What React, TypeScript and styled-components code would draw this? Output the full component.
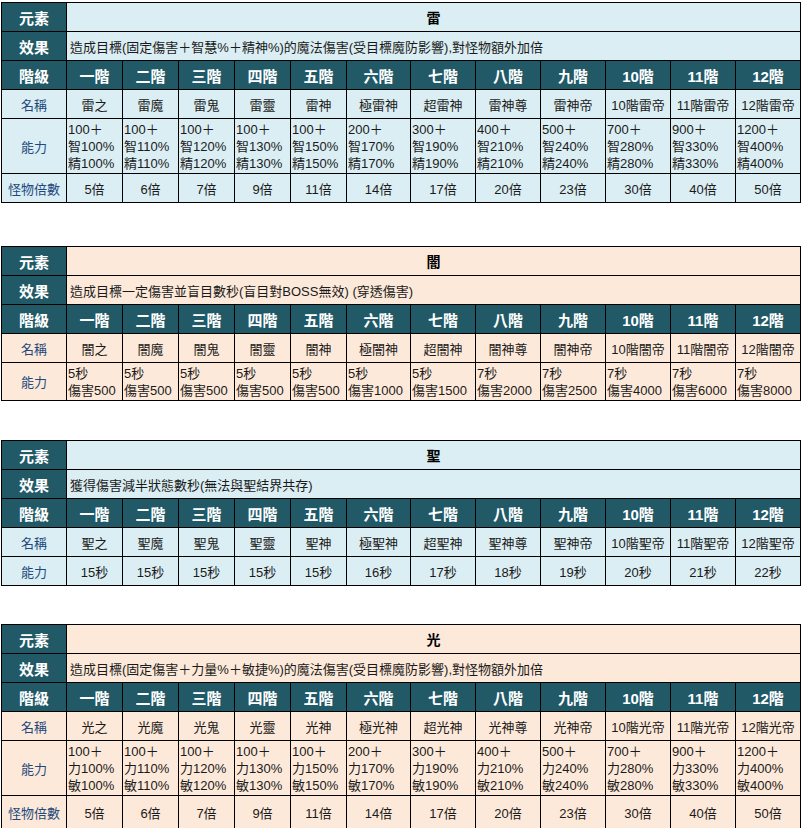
import React from "react";
import styled, { createGlobalStyle } from "styled-components";

const GlobalStyle = createGlobalStyle`
  body {
    margin: 0;
    background: #ffffff;
    font-family: "Liberation Sans", "Noto Sans CJK TC", sans-serif;
  }
`;

const palette = {
  blue: "#daeef3",
  peach: "#fde9d9",
};

type Tone = keyof typeof palette;

const Page = styled.div`
  padding: 2px 0 0 1px;
  width: 800px;
`;

const Sheet = styled.table<{ $tone: Tone; $gap: number }>`
  width: 799px;
  table-layout: fixed;
  border-collapse: collapse;
  margin-top: ${(p) => p.$gap}px;
  background: ${(p) => palette[p.$tone]};
  font-family: "Liberation Sans", "Noto Sans CJK TC", sans-serif;
  font-size: 13px;
  color: #1a1a1a;
`;

const Row = styled.tr<{ $h: number }>`
  height: ${(p) => p.$h}px;
`;

const HeadCell = styled.th`
  border: 1px solid #000;
  background: #215967;
  color: #ffffff;
  font-size: 15px;
  font-weight: 700;
  text-align: center;
  padding: 0;
  white-space: nowrap;
`;

const Label = styled.td`
  border: 1px solid #000;
  color: #1f497d;
  text-align: center;
  padding: 0;
  white-space: nowrap;
`;

const TitleCell = styled.td`
  border: 1px solid #000;
  text-align: center;
  font-size: 14px;
  font-weight: 700;
  color: #000;
  padding: 0;
`;

const EffectCell = styled.td`
  border: 1px solid #000;
  text-align: left;
  padding: 0 3px;
  white-space: nowrap;
`;

const Cell = styled.td`
  border: 1px solid #000;
  text-align: center;
  padding: 0;
  white-space: nowrap;
`;

const StatCell = styled.td`
  border: 1px solid #000;
  text-align: left;
  padding: 0 1px;
  line-height: 17px;
  white-space: nowrap;
`;

const StatLine = styled.div`
  height: 17px;
`;

const widths = [65, 56, 56, 56, 56, 56, 64, 65, 65, 65, 65, 65, 65];

const tiers = ["一階", "二階", "三階", "四階", "五階", "六階", "七階", "八階", "九階", "10階", "11階", "12階"];

const nameSet = (c: string) => [
  `${c}之`, `${c}魔`, `${c}鬼`, `${c}靈`, `${c}神`, `極${c}神`,
  `超${c}神`, `${c}神尊`, `${c}神帝`, `10階${c}帝`, `11階${c}帝`, `12階${c}帝`,
];

const base = [100, 100, 100, 100, 100, 200, 300, 400, 500, 700, 900, 1200];
const pct = [100, 110, 120, 130, 150, 170, 190, 210, 240, 280, 330, 400];
const mult = [5, 6, 7, 9, 11, 14, 17, 20, 23, 30, 40, 50].map((n) => `${n}倍`);

const statLines = (a: string, b: string) =>
  base.map((v, i) => [`${v}＋`, `${a}${pct[i]}%`, `${b}${pct[i]}%`]);

const darkSec = [5, 5, 5, 5, 5, 5, 5, 7, 7, 7, 7, 7];
const darkDmg = [500, 500, 500, 500, 500, 1000, 1500, 2000, 2500, 4000, 6000, 8000];

type Element = {
  tone: Tone;
  gap: number;
  title: string;
  effect: string;
  names: string[];
  stats: string[][];
  statHeight: number;
  statsCentered?: boolean;
  multiplier?: string[];
  multHeight?: number;
};

const elements: Element[] = [
  {
    tone: "blue",
    gap: 0,
    title: "雷",
    effect: "造成目標(固定傷害＋智慧%＋精神%)的魔法傷害(受目標魔防影響),對怪物額外加倍",
    names: nameSet("雷"),
    stats: statLines("智", "精"),
    statHeight: 55,
    multiplier: mult,
    multHeight: 29,
  },
  {
    tone: "peach",
    gap: 43,
    title: "闇",
    effect: "造成目標一定傷害並盲目數秒(盲目對BOSS無效) (穿透傷害)",
    names: nameSet("闇"),
    stats: darkSec.map((s, i) => [`${s}秒`, `傷害${darkDmg[i]}`]),
    statHeight: 38,
  },
  {
    tone: "blue",
    gap: 39,
    title: "聖",
    effect: "獲得傷害減半狀態數秒(無法與聖結界共存)",
    names: nameSet("聖"),
    stats: [15, 15, 15, 15, 15, 16, 17, 18, 19, 20, 21, 22].map((s) => [`${s}秒`]),
    statHeight: 29,
    statsCentered: true,
  },
  {
    tone: "peach",
    gap: 38,
    title: "光",
    effect: "造成目標(固定傷害＋力量%＋敏捷%)的魔法傷害(受目標魔防影響),對怪物額外加倍",
    names: nameSet("光"),
    stats: statLines("力", "敏"),
    statHeight: 55,
    multiplier: mult,
    multHeight: 34,
  },
];

const ElementTable: React.FC<{ el: Element }> = ({ el }) => (
  <Sheet $tone={el.tone} $gap={el.gap}>
    <colgroup>
      {widths.map((w, i) => (
        <col key={i} style={{ width: w }} />
      ))}
    </colgroup>
    <tbody>
      <Row $h={29}>
        <HeadCell>元素</HeadCell>
        <TitleCell colSpan={12}>{el.title}</TitleCell>
      </Row>
      <Row $h={29}>
        <HeadCell>效果</HeadCell>
        <EffectCell colSpan={12}>{el.effect}</EffectCell>
      </Row>
      <Row $h={29}>
        <HeadCell>階級</HeadCell>
        {tiers.map((t) => (
          <HeadCell key={t}>{t}</HeadCell>
        ))}
      </Row>
      <Row $h={29}>
        <Label>名稱</Label>
        {el.names.map((n) => (
          <Cell key={n}>{n}</Cell>
        ))}
      </Row>
      <Row $h={el.statHeight}>
        <Label>能力</Label>
        {el.stats.map((lines, i) =>
          el.statsCentered ? (
            <Cell key={i}>{lines[0]}</Cell>
          ) : (
            <StatCell key={i}>
              {lines.map((l, j) => (
                <StatLine key={j}>{l}</StatLine>
              ))}
            </StatCell>
          )
        )}
      </Row>
      {el.multiplier && (
        <Row $h={el.multHeight ?? 29}>
          <Label>怪物倍數</Label>
          {el.multiplier.map((m, i) => (
            <Cell key={i}>{m}</Cell>
          ))}
        </Row>
      )}
    </tbody>
  </Sheet>
);

export default function App() {
  return (
    <Page>
      <GlobalStyle />
      {elements.map((el) => (
        <ElementTable key={el.title} el={el} />
      ))}
    </Page>
  );
}
